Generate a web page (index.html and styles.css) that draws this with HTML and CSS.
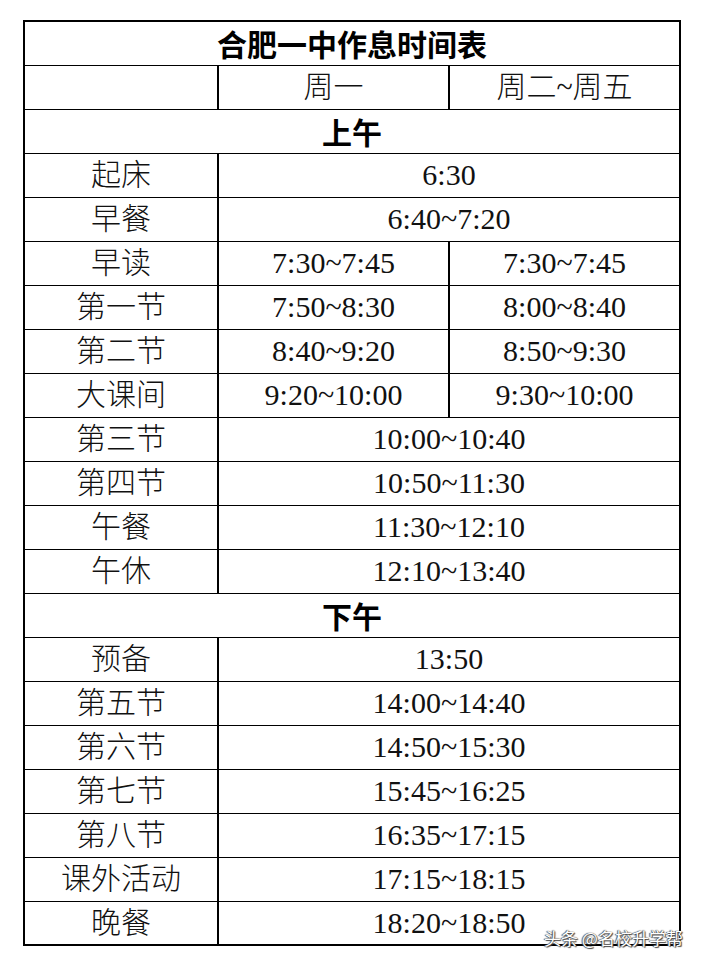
FILE: index.html
```html
<!DOCTYPE html>
<html lang="zh-CN">
<head>
<meta charset="utf-8">
<title>合肥一中作息时间表</title>
<link rel="stylesheet" href="styles.css">
</head>
<body>
<div class="page">
<table class="sched">
<colgroup><col class="c1"><col class="c2"><col class="c3"></colgroup>
<tr><td colspan="3" class="head">合肥一中作息时间表</td></tr>
<tr><td></td><td>周一</td><td>周二~周五</td></tr>
<tr><td colspan="3" class="head">上午</td></tr>
<tr><td>起床</td><td colspan="2">6:30</td></tr>
<tr><td>早餐</td><td colspan="2">6:40~7:20</td></tr>
<tr><td>早读</td><td>7:30~7:45</td><td>7:30~7:45</td></tr>
<tr><td>第一节</td><td>7:50~8:30</td><td>8:00~8:40</td></tr>
<tr><td>第二节</td><td>8:40~9:20</td><td>8:50~9:30</td></tr>
<tr><td>大课间</td><td>9:20~10:00</td><td>9:30~10:00</td></tr>
<tr><td>第三节</td><td colspan="2">10:00~10:40</td></tr>
<tr><td>第四节</td><td colspan="2">10:50~11:30</td></tr>
<tr><td>午餐</td><td colspan="2">11:30~12:10</td></tr>
<tr><td>午休</td><td colspan="2">12:10~13:40</td></tr>
<tr><td colspan="3" class="head">下午</td></tr>
<tr><td>预备</td><td colspan="2">13:50</td></tr>
<tr><td>第五节</td><td colspan="2">14:00~14:40</td></tr>
<tr><td>第六节</td><td colspan="2">14:50~15:30</td></tr>
<tr><td>第七节</td><td colspan="2">15:45~16:25</td></tr>
<tr><td>第八节</td><td colspan="2">16:35~17:15</td></tr>
<tr><td>课外活动</td><td colspan="2">17:15~18:15</td></tr>
<tr class="last"><td>晚餐</td><td colspan="2">18:20~18:50</td></tr>
</table>
<div class="mark">头条 @名校升学帮</div>
</div>
</body>
</html>
```

FILE: styles.css
```css
html, body {
  margin: 0;
  padding: 0;
  background: #ffffff;
}
.page {
  position: relative;
  width: 706px;
  height: 962px;
  padding: 20px 0 0 23px;
  box-sizing: border-box;
}
.sched {
  border-collapse: collapse;
  table-layout: fixed;
  width: 656px;
  border: 2px solid #000;
  font-family: "Liberation Serif", "Noto Sans CJK SC", serif;
  font-weight: 300;
  font-size: 30px;
  color: #111;
}
.c1 { width: 194px; }
.c2 { width: 231px; }
.c3 { width: 231px; }
.sched td {
  height: 44px;
  padding: 0;
  box-sizing: border-box;
  text-align: center;
  vertical-align: middle;
  border-top: 1px solid #000;
  border-bottom: 1px solid #000;
  border-left: 2px solid #000;
  border-right: 2px solid #000;
  line-height: 42px;
  white-space: nowrap;
}
.sched td.head {
  font-family: "Noto Sans CJK SC", sans-serif;
  font-weight: 700;
  font-size: 30px;
  color: #000;
}
.sched tr.last td {
  border-bottom: 2px solid #000;
}
.mark {
  position: absolute;
  left: 544px;
  top: 925px;
  font-family: "Noto Sans CJK SC", sans-serif;
  font-size: 17px;
  color: #fff;
  text-shadow: 0 0 1px #333, 1px 1px 1px #444, -1px 0 1px #555;
}
```
